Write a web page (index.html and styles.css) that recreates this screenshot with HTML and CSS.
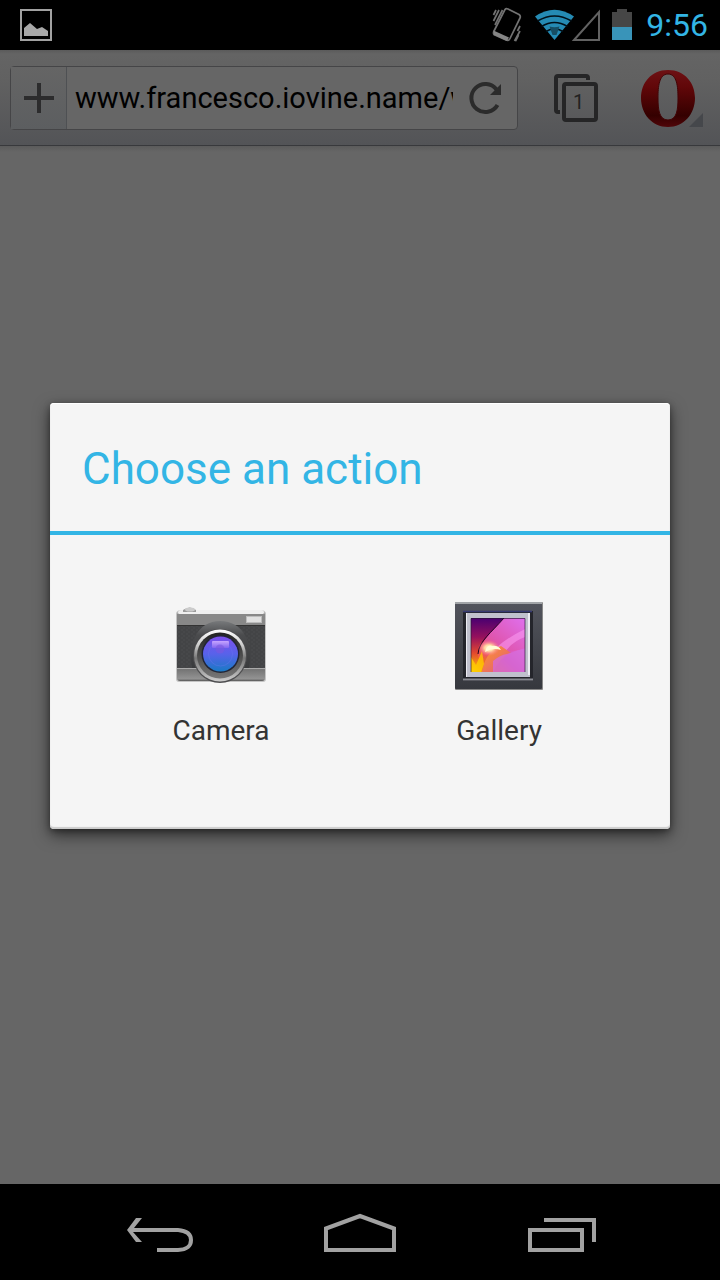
FILE: index.html
```html
<!DOCTYPE html>
<html lang="en">
<head>
<meta charset="utf-8">
<meta name="viewport" content="width=device-width, initial-scale=1">
<title>Choose an action</title>
<link rel="stylesheet" href="styles.css">
</head>
<body>
<header class="status">
  <svg class="status-picture" width="34" height="34" viewBox="0 0 34 34" aria-hidden="true">
    <rect x="2" y="2" width="30" height="30" fill="none" stroke="#a2a2a2" stroke-width="2"/>
    <path d="M5 28V20L11 15L18 21L23 19L29 23V28Z" fill="#a8a8a8"/>
  </svg>
  <div class="status-right">
    <svg width="120" height="50" viewBox="490 0 120 50" aria-hidden="true">
      <g fill="none" stroke="#727272" stroke-width="1.700">
        <path d="M505 9.500Q506 8 508 9L519 14.500Q521 16 520 18L510 38.500Q509 41 506 40L494 34.500Q493 33 494 31Z"/>
        <path d="M493.500 15L496 10M493.500 21L499 10M495 25L502.500 10M520 26L517.500 31M520 31L514.500 41M518.500 35L515.500 41"/>
      </g>
      <path d="M493.500 30.500L509 37.500L507 41L494 35Z" fill="#858585"/>
      <path d="M535 16.500Q554.500 3 574 16.500L554.500 40Z" fill="#258bb4"/>
      <g fill="none" stroke="#001019" stroke-width="1.700">
        <path d="M537.500 21Q554.500 11 571.500 21"/>
        <path d="M541.500 26.500Q554.500 18.500 567.500 26.500"/>
        <path d="M546 31.500Q554.500 26 563 31.500"/>
      </g>
      <path d="M549.500 26.500Q554.500 28 559.500 26.500L556.500 35H552.500Z" fill="#164e64"/>
      <path d="M574 40L599 12V40Z" fill="none" stroke="#626262" stroke-width="2"/>
    </svg>
    <svg class="battery" width="20" height="50" viewBox="612 0 20 50" aria-hidden="true">
      <path d="M612 12H617V9H627V12H632V28H612Z" fill="#464646"/>
      <path d="M612 27H632V40H612Z" fill="#3994b9"/>
    </svg>
    <time class="clock">9:56</time>
  </div>
</header>

<div class="window">
  <div class="toolbar">
    <form class="address">
      <button class="add" type="button" aria-label="Add">
        <svg width="30" height="30" viewBox="0 0 30 30"><path d="M15 0V30M0 15H30" stroke="#2c2c2d" stroke-width="4"/></svg>
      </button>
      <input class="url" type="text" aria-label="Address" value="www.francesco.iovine.name/w">
      <button class="reload" type="button" aria-label="Reload">
        <svg width="36" height="36" viewBox="467 80 36 36">
          <path d="M496.500 89.500A14 14 0 1 0 497.500 105" fill="none" stroke="#2b2b2b" stroke-width="4"/>
          <path d="M501 84V95H490Z" fill="#2b2b2b"/>
        </svg>
      </button>
    </form>
    <button class="tabs" type="button" aria-label="Open tabs">
      <svg width="46" height="50" viewBox="553 73 46 50" aria-hidden="true">
        <path d="M560 112H558Q556 112 556 110V78Q556 76 558 76H586Q588 76 588 78V80" fill="none" stroke="#252526" stroke-width="4"/>
        <rect x="564" y="84" width="32" height="36" rx="2" fill="none" stroke="#252526" stroke-width="4"/>
      </svg>
      <span class="tab-count">1</span>
    </button>
    <button class="menu" type="button" aria-label="Opera menu">
      <svg width="66" height="60" viewBox="639 68 66 60">
        <defs>
          <linearGradient id="red" x1="0" y1="0" x2="0" y2="1">
            <stop offset="0" stop-color="#6d1114"/><stop offset=".3" stop-color="#610709"/><stop offset=".8" stop-color="#340000"/><stop offset="1" stop-color="#500609"/>
          </linearGradient>
        </defs>
        <path d="M703 113V127H689Z" fill="#45474b"/>
        <path fill-rule="evenodd" d="M668 70C685 70 695 83 695 98C695 114 684 127 668 127C652 127 641 114 641 98C641 83 651 70 668 70ZM668 74C659 74 658 87 658 98C658 109 659 120 668 120C677 120 678 109 678 98C678 87 677 74 668 74Z" fill="url(#red)"/>
        <path d="M668 74C659 74 658 87 658 98C658 109 659 120 668 120C677 120 678 109 678 98C678 87 677 74 668 74Z" fill="none" stroke="#420406"/>
      </svg>
    </button>
  </div>
  <main class="page"></main>

  <div class="overlay">
    <section class="dialog" role="dialog" aria-labelledby="dialog-title">
      <h1 class="dialog-title" id="dialog-title">Choose an action</h1>
      <div class="choices">
        <button class="choice" type="button">
          <svg width="96" height="96" viewBox="0 0 96 96" aria-hidden="true">
            <defs>
              <linearGradient id="metal" x1="0" y1="0" x2="0" y2="1"><stop offset="0" stop-color="#ddd"/><stop offset=".08" stop-color="#8a8a8a"/><stop offset=".2" stop-color="#888"/><stop offset=".85" stop-color="#777"/><stop offset=".97" stop-color="#939393"/><stop offset="1" stop-color="#555"/></linearGradient>
              <linearGradient id="ring" x1="0" y1="0" x2="0" y2="1"><stop offset="0" stop-color="#fff"/><stop offset=".3" stop-color="#ccc"/><stop offset=".55" stop-color="#777"/><stop offset="1" stop-color="#ccc"/></linearGradient>
              <linearGradient id="barrel" x1="0" y1="0" x2="0" y2="1"><stop offset="0" stop-color="#222"/><stop offset="1" stop-color="#777"/></linearGradient>
              <linearGradient id="hood" x1="0" y1="0" x2="0" y2="1"><stop offset="0" stop-color="#77797b"/><stop offset=".3" stop-color="#4a4b4d"/><stop offset="1" stop-color="#3a3b3d"/></linearGradient>
              <linearGradient id="lens" x1="0" y1="0" x2="0" y2="1"><stop offset="0" stop-color="#7d50ed"/><stop offset=".5" stop-color="#5862ea"/><stop offset="1" stop-color="#197ac5"/></linearGradient>
              <linearGradient id="glare" x1="0" y1="0" x2="0" y2="1"><stop offset="0" stop-color="#c6a5ff"/><stop offset="1" stop-color="#8265ef"/></linearGradient>
              <pattern id="leather" width="5" height="4" patternUnits="userSpaceOnUse"><rect width="5" height="4" fill="#434446"/><path d="M0 1H2M3 3H5" stroke="#4a4b4d"/></pattern>
            </defs>
            <rect x="3" y="12" width="90" height="71" rx="3" fill="#000" opacity=".2"/>
            <rect x="4" y="11" width="88" height="71" rx="3" fill="url(#metal)"/>
            <path d="M5 14Q5 11 9 11H88Q91 11 91 14L90 15H6Z" fill="#efefef"/>
            <path d="M10 13V11Q17 6 23 11V13Z" fill="#9b9b9b"/><ellipse cx="17" cy="10.500" rx="5" ry="2" fill="#ccc"/>
            <path d="M4 15H92V26H4Z" fill="#888"/>
            <path d="M4 26H92V69H4Z" fill="url(#leather)"/>
            <path d="M4 26.500H92" stroke="#333"/>
            <path d="M4 69.500H92" stroke="#aaa"/>
            <rect x="73.500" y="17.500" width="15" height="6" fill="#e0e0e0" stroke="#bcbcbc"/>
            <path d="M19 69C14 44 25 22 47 22C70 22 81 44 76 69Z" fill="url(#hood)"/>
            <circle cx="47" cy="57" r="27" fill="#4d4d4f"/>
            <circle cx="47" cy="56.500" r="26" fill="url(#ring)"/>
            <circle cx="47" cy="56.500" r="23" fill="url(#barrel)"/>
            <circle cx="47.500" cy="55" r="19" fill="#222535"/>
            <circle cx="47.500" cy="55" r="17.500" fill="url(#lens)"/>
            <circle cx="47.500" cy="55" r="12" fill="none" stroke="#6a75ed" opacity=".4"/>
            <rect x="39" y="42" width="17" height="7" rx="1" fill="url(#glare)"/>
            <circle cx="47" cy="50" r="4.500" fill="#7a59df" opacity=".6"/>
          </svg>
          <span>Camera</span>
        </button>
        <button class="choice" type="button">
          <svg width="96" height="96" viewBox="0 0 96 96" aria-hidden="true">
            <defs>
              <linearGradient id="frame" x1="0" y1="0" x2="0" y2="1"><stop offset="0" stop-color="#52545c"/><stop offset="1" stop-color="#36383e"/></linearGradient>
              <linearGradient id="photo" x1="0" y1="1" x2="1" y2="0"><stop offset="0" stop-color="#ffd000"/><stop offset=".2" stop-color="#f36c1c"/><stop offset=".45" stop-color="#d34aae"/><stop offset=".7" stop-color="#e372e9"/><stop offset="1" stop-color="#c55de1"/></linearGradient>
              <linearGradient id="corner" x1="0" y1="0" x2="0" y2="1"><stop offset="0" stop-color="#490071"/><stop offset=".35" stop-color="#95105d"/><stop offset=".65" stop-color="#e3492e"/><stop offset="1" stop-color="#ffca00"/></linearGradient>
              <linearGradient id="bloom" x1="0" y1="1" x2="1" y2="0"><stop offset="0" stop-color="#f45a3a"/><stop offset=".4" stop-color="#df55ae"/><stop offset="1" stop-color="#df70ee"/></linearGradient>
              <linearGradient id="petal" x1="0" y1="0" x2="1" y2="1"><stop offset="0" stop-color="#ff9a22"/><stop offset="1" stop-color="#df5489"/></linearGradient>
              <radialGradient id="glow"><stop offset="0" stop-color="#fffde4"/><stop offset=".4" stop-color="#ffd9a0"/><stop offset="1" stop-color="#f69" stop-opacity="0"/></radialGradient>
              <clipPath id="photo-clip"><rect x="20" y="19" width="54" height="54"/></clipPath>
            </defs>
            <rect x="4" y="3" width="88" height="88" rx="1" fill="#888"/>
            <rect x="4" y="4" width="87" height="86" rx="1" fill="url(#frame)"/>
            <path d="M4 4H91" stroke="#a1a4a7" stroke-width="2"/>
            <path d="M12 12H82V82H12Z" fill="#24252b"/>
            <path d="M12 12.500H81" stroke="#373a72" stroke-width="1.500"/>
            <path d="M12 80.500H82" stroke="#888a91" stroke-width="2"/>
            <path d="M15 14H79V78H15Z" fill="#ececf2"/>
            <path d="M15 14H16V78H79V76H77V14" fill="#c0c1cd"/>
            <g clip-path="url(#photo-clip)">
              <rect x="20" y="19" width="54" height="54" fill="url(#photo)"/>
              <path d="M20 19H53C40 34 26 46 28 62L20 73Z" fill="url(#corner)"/>
              <path d="M53 19C40 34 26 46 27 59L74 50V19Z" fill="url(#bloom)"/>
              <path d="M53 19C40 34 28 42 27 55" fill="none" stroke="#220222"/>
              <path d="M74 30Q56 39 46 48L54 53Q62 42 74 38Z" fill="#fc9df2" opacity=".55"/>
              <path d="M31 73Q34 53 50 47L60 54Q49 58 42 73Z" fill="url(#petal)"/>
              <path d="M42 73V62Q49 56 56 55L74 49V73Z" fill="#d66bd8" opacity=".8"/>
              <path d="M20 73V58L25 66L31 52L33 65L30 73Z" fill="#ffd200" opacity=".75"/>
              <ellipse cx="38" cy="49" rx="11" ry="8" fill="url(#glow)"/>
              <path d="M34 53Q36 45 41 47Q47 46 50 51Q42 48 34 53Z" fill="#fffbd5"/>
            </g>
            <path d="M20 73V19.500H74V73" fill="none" stroke="#261433" stroke-opacity=".65"/>
          </svg>
          <span>Gallery</span>
        </button>
      </div>
    </section>
  </div>
</div>

<nav class="system-nav">
  <button type="button" aria-label="Back">
    <svg width="80" height="60" viewBox="120 1202 80 60"><path d="M141 1218H136L127 1230L136 1242H142L133 1232H178Q189 1233 189 1240Q189 1248 178 1248H157V1252H178Q193 1251 193 1240Q193 1229 178 1228H134L142 1218Z" fill="#a2a2a2"/></svg>
  </button>
  <button type="button" aria-label="Home">
    <svg width="80" height="60" viewBox="320 1202 80 60"><path d="M326 1250V1228.500L360 1216L394 1228.500V1250Z" fill="none" stroke="#a2a2a2" stroke-width="4"/></svg>
  </button>
  <button type="button" aria-label="Recent apps">
    <svg width="80" height="60" viewBox="520 1202 80 60"><path d="M530 1230H582V1250H530ZM544 1220H594V1242" fill="none" stroke="#a2a2a2" stroke-width="4"/></svg>
  </button>
</nav>
</body>
</html>
```
FILE: styles.css
```css
* { box-sizing: border-box; }
body {
  margin: 0;
  min-height: 100vh;
  display: flex;
  flex-direction: column;
  background: #000;
  font-family: Roboto, "Noto Sans", sans-serif;
}
button {
  margin: 0;
  padding: 0;
  border: 0;
  background: none;
  color: inherit;
  font: inherit;
}
svg { display: block; flex: none; }

.status {
  display: flex;
  align-items: center;
  justify-content: space-between;
  height: 50px;
  padding: 0 12px 0 19px;
}
.status-right { display: flex; align-items: center; }
.battery { margin-left: 2px; }
.clock {
  margin-left: 14px;
  color: #33b5e5;
  font-size: 32px;
  line-height: 52px;
}

.window {
  position: relative;
  flex: 1;
  display: flex;
  flex-direction: column;
}
.toolbar {
  display: flex;
  align-items: center;
  height: 96px;
  padding: 0 15px 0 10px;
  border-bottom: 1px solid #38393c;
  background: linear-gradient(#5a5a5a, #646464 4px, #616161 30px, #535457);
}
.address {
  flex: 1;
  min-width: 0;
  display: flex;
  align-items: stretch;
  height: 64px;
  border: 1px solid #454547;
  border-radius: 4px;
  background: #666;
}
.add {
  flex: none;
  display: grid;
  place-items: center;
  width: 56px;
  border-right: 1px solid #4e5053;
  background: linear-gradient(#656565, #5c5e60);
}
.url {
  flex: 1;
  min-width: 0;
  margin: 0 0 0 8px;
  padding: 0;
  border: 0;
  outline: 0;
  background: none;
  color: #000;
  font-family: inherit;
  font-size: 29px;
}
.reload {
  flex: none;
  display: grid;
  place-items: center;
  width: 64px;
}
.tabs {
  position: relative;
  flex: none;
  margin-left: 35px;
}
.tab-count {
  position: absolute;
  inset: 9px 0 0 5px;
  display: grid;
  place-items: center;
  color: #222;
  font-size: 20px;
}
.menu { flex: none; margin-left: 40px; }
.page {
  flex: 1;
  background: linear-gradient(#5b5b5b, #666 6px);
}

.overlay {
  position: absolute;
  inset: 0;
  display: flex;
  align-items: center;
  justify-content: center;
  padding: 0 50px 2px;
}
.dialog {
  flex: 1;
  border-radius: 4px;
  background: #f5f5f5;
  box-shadow: 0 6px 16px rgba(0, 0, 0, .55), 0 2px 6px rgba(0, 0, 0, .35), inset 0 -2px 1px #ccc, inset 0 1px #fff;
}
.dialog-title {
  margin: 0;
  padding: 4px 32px 0;
  border-bottom: 4px solid #33b5e5;
  color: #33b5e5;
  font-size: 44px;
  font-weight: 400;
  line-height: 124px;
}
.choices {
  display: grid;
  grid-template-columns: 1fr 1fr;
  padding: 64px 32px 78px;
}
.choice {
  display: flex;
  flex-direction: column;
  align-items: center;
  gap: 16px;
  color: #333;
  font-size: 28px;
  line-height: 40px;
}

.system-nav {
  display: flex;
  align-items: center;
  justify-content: center;
  gap: 120px;
  height: 96px;
}
```
